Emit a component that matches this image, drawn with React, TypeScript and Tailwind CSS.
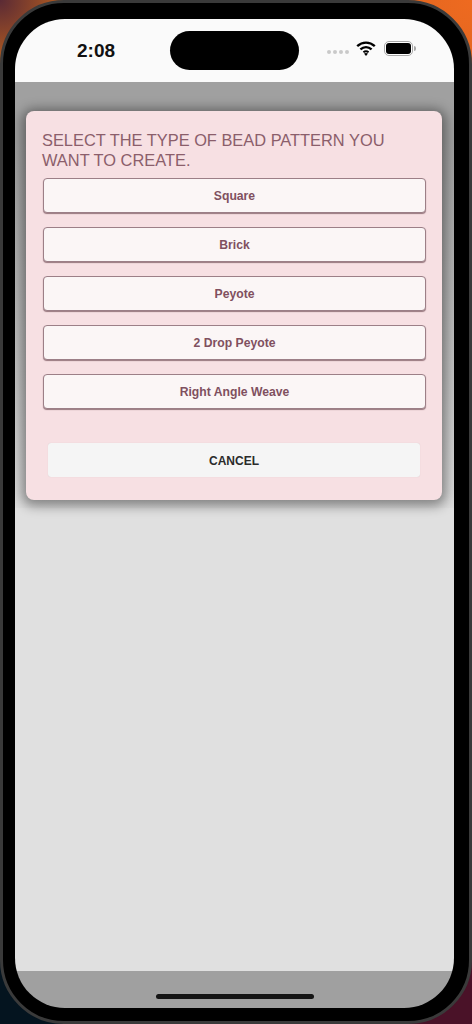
// App.tsx
const patterns = ['Square', 'Brick', 'Peyote', '2 Drop Peyote', 'Right Angle Weave'];

function StatusBar() {
  return (
    <div className="relative flex h-[63px] shrink-0 items-start justify-between bg-[#fafafa] pt-[20px] pl-[62px] pr-[38px]">
      <span className="text-[19px] leading-[24px] font-semibold text-[#111]">2:08</span>
      {/* dynamic island */}
      <div className="absolute left-[155px] top-[12px] h-[39px] w-[129px] rounded-full bg-black" />
      <div className="-mt-[1px] flex items-center pt-[3px]">
        <div className="mr-[7px] mt-[6px] flex gap-[2px]">
          <span className="h-[4px] w-[4px] rounded-full bg-[#c9c9c9]" />
          <span className="h-[4px] w-[4px] rounded-full bg-[#c9c9c9]" />
          <span className="h-[4px] w-[4px] rounded-full bg-[#c9c9c9]" />
          <span className="h-[4px] w-[4px] rounded-full bg-[#c9c9c9]" />
        </div>
        <svg width="20" height="15" viewBox="0 0 20 15" fill="none" stroke="#000" strokeWidth="2.4">
          <path d="M1.2 5.2C6.4.4 13.6.4 18.8 5.2" />
          <path d="M4.4 8.4c3.4-3 7.8-3 11.2 0" />
          <path d="M7.4 11.2c1.7-1.3 3.5-1.3 5.2 0" strokeWidth="2" />
          <path d="M10 15l-2-2.4c1.3-.8 2.7-.8 4 0z" fill="#000" stroke="none" />
        </svg>
        <div className="ml-[8px] flex items-center">
          <div className="flex h-[15px] w-[29px] items-center justify-center rounded-[5px] border border-[#a8a8a8] bg-white">
            <div className="h-[11px] w-[25px] rounded-[3px] bg-black" />
          </div>
          <div className="ml-[1px] h-[5px] w-[2px] rounded-r-full bg-[#a8a8a8]" />
        </div>
      </div>
    </div>
  );
}

function PatternDialog() {
  return (
    <div className="rounded-[8px] bg-[#f7e0e3] pl-[17px] pr-[16px] pt-[19px] pb-[23px] shadow-[0_2px_12px_4px_rgba(0,0,0,0.4)]">
      <h2 className="-ml-[1px] text-[16.4px] leading-[20px] font-normal text-[#8b5e6b]">
        SELECT THE TYPE OF BEAD PATTERN YOU WANT TO CREATE.
      </h2>
      <div className="mt-[8px] flex flex-col gap-[14px]">
        {patterns.map((name) => (
          <button
            key={name}
            className="h-[35px] rounded-[4px] border border-[#9c7f87] bg-[#fbf6f6] pt-[1px] text-[12.2px] font-bold text-[#80505f] shadow-[0_1px_1px_rgba(90,50,60,0.6)]"
          >
            {name}
          </button>
        ))}
      </div>
      <button className="mx-[5px] mt-[34px] block h-[34px] w-[372px] rounded-[3px] bg-[#f5f5f5] pt-[1px] text-[12px] font-bold text-[#2b2b2b] shadow-[0_0_1px_rgba(0,0,0,0.15)]">
        CANCEL
      </button>
    </div>
  );
}

export default function App() {
  return (
    <div className="h-[1024px] w-[472px] overflow-hidden bg-[radial-gradient(circle_at_0_0,#5a2a35_0,#b05a20_60px,transparent_90px),radial-gradient(circle_at_100%_0,#ee6a20_0,#e0651f_90px,transparent_100px),radial-gradient(circle_at_0_100%,#04141f_0,#04141f_90px,transparent_100px),radial-gradient(circle_at_100%_100%,#4a1228_0,#4a1228_90px,transparent_100px)] font-['Liberation_Sans',Arial,sans-serif]">
      {/* phone body */}
      <div className="h-[1024px] w-[472px] rounded-[64px] border-[3px] border-[#3a3a3a] bg-black pt-[16px] pr-[15px] pb-[13px] pl-[12px]">
        <div className="flex h-[989px] w-[439px] flex-col overflow-hidden rounded-[50px]">
          <StatusBar />
          <div className="flex-1 bg-[#e0e0e0]">
            <div className="bg-[linear-gradient(#a0a0a0_0,#a0a0a0_60px,#c4c4c4_300px,#dcdcdc_100%)] pl-[11px] pr-[12px] pt-[29px] pb-[8px]">
              <PatternDialog />
            </div>
          </div>
          <div className="flex h-[37px] shrink-0 items-end justify-center bg-[#a0a0a0] pb-[9px]">
            <div className="h-[5px] w-[158px] rounded-full bg-[#151515]" />
          </div>
        </div>
      </div>
    </div>
  );
}
